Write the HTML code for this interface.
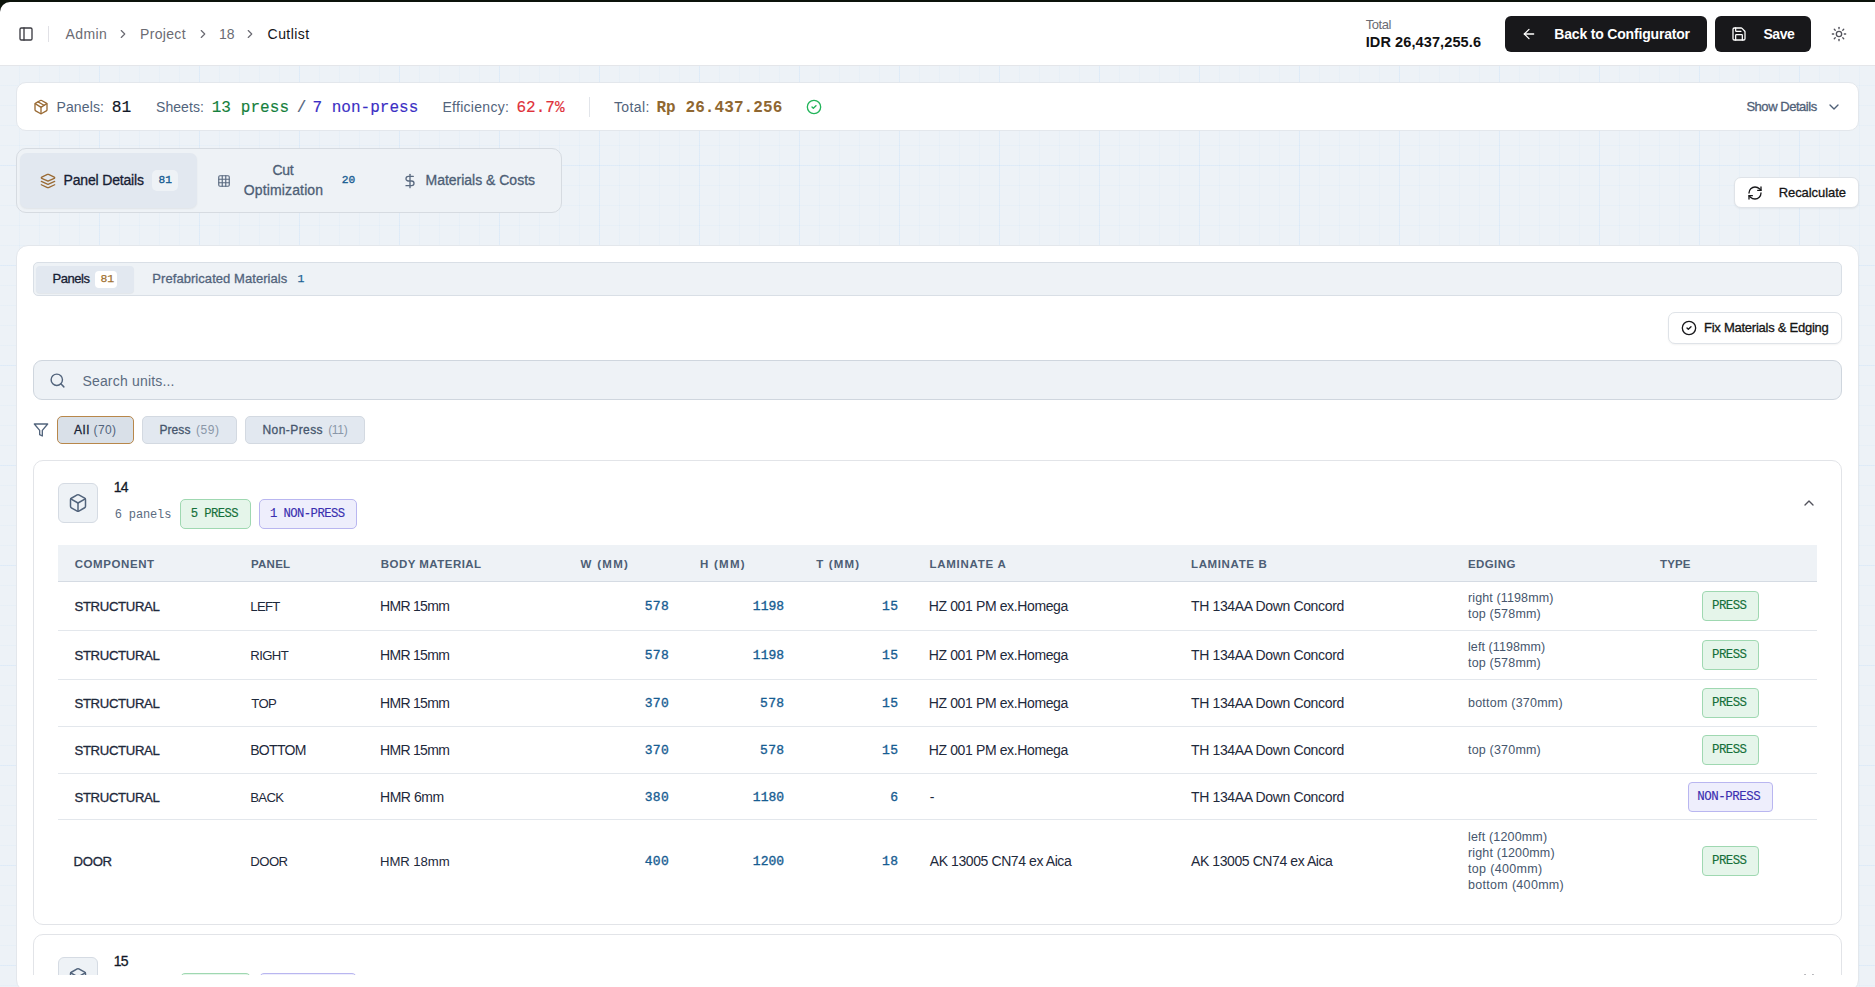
<!DOCTYPE html><html><head><meta charset="utf-8"><style>*{box-sizing:border-box;margin:0;padding:0}
html,body{width:1875px;height:987px;overflow:hidden}
body{font-family:"Liberation Sans",sans-serif;position:relative;background-color:#edf2f7;
background-image:linear-gradient(to right,rgba(147,197,253,.11) 1px,transparent 1px),linear-gradient(to bottom,rgba(147,197,253,.11) 1px,transparent 1px),linear-gradient(to right,rgba(147,197,253,.06) 1px,transparent 1px),linear-gradient(to bottom,rgba(147,197,253,.06) 1px,transparent 1px);
background-size:100px 100px,100px 100px,20px 20px,20px 20px;background-position:99px 65px,99px 65px,19px 5px,19px 5px}
.t{position:absolute;white-space:nowrap}
.r{position:absolute}
svg{position:absolute;overflow:visible}
#topbar{position:absolute;left:0;top:0;width:1875px;height:2px;background:#0c130b}
#corner{position:absolute;left:0;top:2px;width:10px;height:10px;background:#0c130b}
</style></head><body><div id="topbar"></div><div id="corner"></div>
<div class="r" style="left:0px;top:2px;width:1875px;height:64px;background:#fff;border-bottom:1px solid #e4e6ea;border-radius:10px 0 0 0"></div>
<svg style="left:17.95px;top:25.85px" width="16" height="16" viewBox="0 0 24 24" fill="none" stroke="#3b3b42" stroke-width="2" stroke-linecap="round" stroke-linejoin="round"><rect width="18" height="18" x="3" y="3" rx="2"/><path d="M9 3v18"/></svg>
<div class="r" style="left:48px;top:26px;width:1px;height:16px;background:#e1e1e6"></div>
<div class="t" id="t1" style="left:65.50px;top:24.00px;font-size:14px;line-height:20px;color:#6b6b73;font-weight:normal;font-family:'Liberation Sans',sans-serif;letter-spacing:0.401px;">Admin</div>
<svg style="left:115.70px;top:26.90px" width="14" height="14" viewBox="0 0 24 24" fill="none" stroke="#6b6b73" stroke-width="2" stroke-linecap="round" stroke-linejoin="round"><path d="m9 18 6-6-6-6"/></svg>
<div class="t" id="t2" style="left:140.00px;top:24.00px;font-size:14px;line-height:20px;color:#6b6b73;font-weight:normal;font-family:'Liberation Sans',sans-serif;letter-spacing:0.336px;">Project</div>
<svg style="left:196.05px;top:26.90px" width="14" height="14" viewBox="0 0 24 24" fill="none" stroke="#6b6b73" stroke-width="2" stroke-linecap="round" stroke-linejoin="round"><path d="m9 18 6-6-6-6"/></svg>
<div class="t" id="t3" style="left:219.00px;top:24.00px;font-size:14px;line-height:20px;color:#6b6b73;font-weight:normal;font-family:'Liberation Sans',sans-serif;letter-spacing:0.000px;">18</div>
<svg style="left:243.00px;top:26.90px" width="14" height="14" viewBox="0 0 24 24" fill="none" stroke="#6b6b73" stroke-width="2" stroke-linecap="round" stroke-linejoin="round"><path d="m9 18 6-6-6-6"/></svg>
<div class="t" id="t4" style="left:267.60px;top:24.00px;font-size:14px;line-height:20px;color:#141418;font-weight:normal;font-family:'Liberation Sans',sans-serif;letter-spacing:0.432px;">Cutlist</div>
<div class="t" id="t5" style="left:1365.70px;top:15.00px;font-size:13px;line-height:20px;color:#6b6b73;font-weight:normal;font-family:'Liberation Sans',sans-serif;letter-spacing:-0.468px;">Total</div>
<div class="t" id="t6" style="left:1365.70px;top:32.00px;font-size:14.5px;line-height:20px;color:#111;font-weight:bold;font-family:'Liberation Sans',sans-serif;letter-spacing:0.107px;">IDR 26,437,255.6</div>
<div class="r" style="left:1505px;top:16px;width:202px;height:36px;background:#18181b;border-radius:6px"></div>
<svg style="left:1520.90px;top:26.05px" width="16" height="16" viewBox="0 0 24 24" fill="none" stroke="#fff" stroke-width="1.9" stroke-linecap="round" stroke-linejoin="round"><path d="m12 19-7-7 7-7"/><path d="M19 12H5"/></svg>
<div class="t" id="t7" style="left:1554.30px;top:24.00px;font-size:14px;line-height:20px;color:#fff;font-weight:bold;font-family:'Liberation Sans',sans-serif;letter-spacing:-0.183px;">Back to Configurator</div>
<div class="r" style="left:1715px;top:16px;width:96px;height:36px;background:#18181b;border-radius:6px"></div>
<svg style="left:1731.15px;top:25.95px" width="16" height="16" viewBox="0 0 24 24" fill="none" stroke="#fff" stroke-width="1.9" stroke-linecap="round" stroke-linejoin="round"><path d="M15.2 3a2 2 0 0 1 1.4.6l3.8 3.8a2 2 0 0 1 .6 1.4V19a2 2 0 0 1-2 2H5a2 2 0 0 1-2-2V5a2 2 0 0 1 2-2z"/><path d="M17 21v-7a1 1 0 0 0-1-1H8a1 1 0 0 0-1 1v7"/><path d="M7 3v4a1 1 0 0 0 1 1h7"/></svg>
<div class="t" id="t8" style="left:1763.40px;top:24.00px;font-size:14px;line-height:20px;color:#fff;font-weight:bold;font-family:'Liberation Sans',sans-serif;letter-spacing:-0.403px;">Save</div>
<svg style="left:1831.00px;top:26.00px" width="16" height="16" viewBox="0 0 24 24" fill="none" stroke="#52525b" stroke-width="2" stroke-linecap="round" stroke-linejoin="round"><circle cx="12" cy="12" r="4"/><path d="M12 2v2"/><path d="M12 20v2"/><path d="m4.93 4.93 1.41 1.41"/><path d="m17.66 17.66 1.41 1.41"/><path d="M2 12h2"/><path d="M20 12h2"/><path d="m6.34 17.66-1.41 1.41"/><path d="m19.07 4.93-1.41 1.41"/></svg>
<div class="r" style="left:16px;top:82px;width:1843px;height:49px;background:#fff;border:1px solid #e3e7ec;border-radius:10px"></div>
<svg style="left:32.75px;top:99.00px" width="16" height="16" viewBox="0 0 24 24" fill="none" stroke="#9a6b35" stroke-width="2" stroke-linecap="round" stroke-linejoin="round"><path d="M11 21.73a2 2 0 0 0 2 0l7-4A2 2 0 0 0 21 16V8a2 2 0 0 0-1-1.73l-7-4a2 2 0 0 0-2 0l-7 4A2 2 0 0 0 3 8v8a2 2 0 0 0 1 1.73z"/><path d="M12 22V12"/><path d="m3.3 7 7.703 4.734a2 2 0 0 0 1.994 0L20.7 7"/><path d="m7.5 4.27 9 5.15"/></svg>
<div class="t" id="t9" style="left:56.50px;top:97.00px;font-size:14px;line-height:20px;color:#52647c;font-weight:normal;font-family:'Liberation Sans',sans-serif;letter-spacing:0.116px;">Panels:</div>
<div class="t" id="t10" style="left:111.64px;top:98.00px;font-size:16.29px;line-height:20px;color:#111827;font-weight:normal;font-family:'Liberation Mono',monospace;letter-spacing:0.000px;-webkit-text-stroke:0.15px #111827;">81</div>
<div class="t" id="t11" style="left:156.00px;top:97.00px;font-size:14px;line-height:20px;color:#52647c;font-weight:normal;font-family:'Liberation Sans',sans-serif;letter-spacing:0.069px;">Sheets:</div>
<div class="t" id="t12" style="left:211.70px;top:98.00px;font-size:16px;line-height:20px;color:#15803d;font-weight:normal;font-family:'Liberation Mono',monospace;letter-spacing:0.084px;-webkit-text-stroke:0.15px #15803d;">13 press</div>
<div class="t" id="t13" style="left:296.70px;top:98.00px;font-size:16px;line-height:20px;color:#52647c;font-weight:normal;font-family:'Liberation Mono',monospace;letter-spacing:0.000px;-webkit-text-stroke:0.15px #52647c;">/</div>
<div class="t" id="t14" style="left:312.50px;top:98.00px;font-size:16px;line-height:20px;color:#3b2fc4;font-weight:normal;font-family:'Liberation Mono',monospace;letter-spacing:0.018px;-webkit-text-stroke:0.15px #3b2fc4;">7 non-press</div>
<div class="t" id="t15" style="left:442.40px;top:97.00px;font-size:14px;line-height:20px;color:#52647c;font-weight:normal;font-family:'Liberation Sans',sans-serif;letter-spacing:0.294px;">Efficiency:</div>
<div class="t" id="t16" style="left:516.40px;top:98.00px;font-size:16px;line-height:20px;color:#e0313a;font-weight:normal;font-family:'Liberation Mono',monospace;letter-spacing:0.023px;-webkit-text-stroke:0.15px #e0313a;">62.7%</div>
<div class="r" style="left:589px;top:97px;width:1px;height:20px;background:#e2e5ea"></div>
<div class="t" id="t17" style="left:614.00px;top:97.00px;font-size:14px;line-height:20px;color:#52647c;font-weight:normal;font-family:'Liberation Sans',sans-serif;letter-spacing:0.366px;">Total:</div>
<div class="t" id="t18" style="left:656.40px;top:98.00px;font-size:16px;line-height:20px;color:#8f6731;font-weight:bold;font-family:'Liberation Mono',monospace;letter-spacing:0.090px;">Rp 26.437.256</div>
<svg style="left:805.65px;top:98.80px" width="16" height="16" viewBox="0 0 24 24" fill="none" stroke="#22b45a" stroke-width="2" stroke-linecap="round" stroke-linejoin="round"><circle cx="12" cy="12" r="10"/><path d="m9 12 2 2 4-4"/></svg>
<div class="t" id="t19" style="left:1746.40px;top:97.00px;font-size:13px;line-height:20px;color:#4f6077;font-weight:normal;font-family:'Liberation Sans',sans-serif;letter-spacing:-0.461px;-webkit-text-stroke:0.3px #4f6077;">Show Details</div>
<svg style="left:1826.00px;top:99.20px" width="16" height="16" viewBox="0 0 24 24" fill="none" stroke="#4f6077" stroke-width="2" stroke-linecap="round" stroke-linejoin="round"><path d="m6 9 6 6 6-6"/></svg>
<div class="r" style="left:16px;top:148px;width:546px;height:65px;background:#eef2f6;border:1px solid #d6dbe1;border-radius:10px"></div>
<div class="r" style="left:20px;top:153px;width:177px;height:55px;background:#e2e8f0;border-radius:7px;box-shadow:0 1px 2px rgba(0,0,0,.06)"></div>
<svg style="left:40.05px;top:173.05px" width="16" height="16" viewBox="0 0 24 24" fill="none" stroke="#9a6b35" stroke-width="2" stroke-linecap="round" stroke-linejoin="round"><path d="m12.83 2.18a2 2 0 0 0-1.66 0L2.6 6.08a1 1 0 0 0 0 1.83l8.58 3.91a2 2 0 0 0 1.66 0l8.58-3.9a1 1 0 0 0 0-1.83Z"/><path d="m22 17.65-9.17 4.16a2 2 0 0 1-1.66 0L2 17.65"/><path d="m22 12.65-9.17 4.16a2 2 0 0 1-1.66 0L2 12.65"/></svg>
<div class="t" id="t20" style="left:63.50px;top:170.00px;font-size:14px;line-height:20px;color:#172033;font-weight:normal;font-family:'Liberation Sans',sans-serif;letter-spacing:-0.166px;-webkit-text-stroke:0.3px #172033;">Panel Details</div>
<div class="r" style="left:152px;top:170px;width:26px;height:21px;background:#eef2f6;border-radius:5px"></div>
<div class="t" id="t21" style="left:158.60px;top:170.00px;font-size:11.2px;line-height:20px;color:#1b5f94;font-weight:normal;font-family:'Liberation Mono',monospace;letter-spacing:0.000px;-webkit-text-stroke:0.35px #1b5f94;">81</div>
<svg style="left:216.85px;top:174.20px" width="14" height="14" viewBox="0 0 24 24" fill="none" stroke="#5a6a80" stroke-width="2" stroke-linecap="round" stroke-linejoin="round"><rect width="18" height="18" x="3" y="3" rx="2"/><path d="M3 9h18"/><path d="M3 15h18"/><path d="M9 3v18"/><path d="M15 3v18"/></svg>
<div class="t" id="t22" style="left:272.60px;top:160.00px;font-size:14px;line-height:20px;color:#4d5e75;font-weight:normal;font-family:'Liberation Sans',sans-serif;letter-spacing:-0.398px;-webkit-text-stroke:0.3px #4d5e75;">Cut</div>
<div class="t" id="t23" style="left:243.80px;top:180.00px;font-size:14px;line-height:20px;color:#4d5e75;font-weight:normal;font-family:'Liberation Sans',sans-serif;letter-spacing:0.134px;-webkit-text-stroke:0.3px #4d5e75;">Optimization</div>
<div class="t" id="t24" style="left:341.70px;top:170.00px;font-size:11.2px;line-height:20px;color:#1b5f94;font-weight:normal;font-family:'Liberation Mono',monospace;letter-spacing:0.000px;-webkit-text-stroke:0.35px #1b5f94;">20</div>
<svg style="left:401.90px;top:173.00px" width="16" height="16" viewBox="0 0 24 24" fill="none" stroke="#5a6a80" stroke-width="2" stroke-linecap="round" stroke-linejoin="round"><path d="M12 2v20"/><path d="M17 5H9.5a3.5 3.5 0 0 0 0 7h5a3.5 3.5 0 0 1 0 7H6"/></svg>
<div class="t" id="t25" style="left:425.50px;top:170.00px;font-size:14px;line-height:20px;color:#4d5e75;font-weight:normal;font-family:'Liberation Sans',sans-serif;letter-spacing:-0.012px;-webkit-text-stroke:0.3px #4d5e75;">Materials &amp; Costs</div>
<div class="r" style="left:1734px;top:177px;width:125px;height:31px;background:#fff;border:1px solid #dfe3e8;border-radius:7px;box-shadow:0 1px 2px rgba(0,0,0,.05)"></div>
<svg style="left:1746.80px;top:184.90px" width="16" height="16" viewBox="0 0 24 24" fill="none" stroke="#18181b" stroke-width="2" stroke-linecap="round" stroke-linejoin="round"><path d="M3 12a9 9 0 0 1 9-9 9.75 9.75 0 0 1 6.74 2.74L21 8"/><path d="M21 3v5h-5"/><path d="M21 12a9 9 0 0 1-9 9 9.75 9.75 0 0 1-6.74-2.74L3 16"/><path d="M8 16H3v5"/></svg>
<div class="t" id="t26" style="left:1778.70px;top:183.00px;font-size:13px;line-height:20px;color:#151515;font-weight:normal;font-family:'Liberation Sans',sans-serif;letter-spacing:-0.070px;-webkit-text-stroke:0.3px #151515;">Recalculate</div>
<div class="r" style="left:16px;top:245px;width:1843px;height:747px;background:#fff;border:1px solid #e3e7ec;border-radius:12px"></div>
<div class="r" style="left:17px;top:246px;width:1840px;height:729px;overflow:hidden">
<div class="r" style="left:-17px;top:-246px;width:1875px;height:1300px">
<div class="r" style="left:33px;top:262px;width:1809px;height:34px;background:#eef2f6;border:1px solid #d9dfe6;border-radius:5px"></div>
<div class="r" style="left:36px;top:265.5px;width:97.5px;height:27.5px;background:#e2e8f0;border-radius:4px;box-shadow:0 1px 1px rgba(0,0,0,.05)"></div>
<div class="t" id="t27" style="left:52.50px;top:269.00px;font-size:13px;line-height:20px;color:#172033;font-weight:normal;font-family:'Liberation Sans',sans-serif;letter-spacing:-0.450px;-webkit-text-stroke:0.3px #172033;">Panels</div>
<div class="r" style="left:95px;top:271px;width:21.5px;height:17px;background:#fff;border-radius:4px"></div>
<div class="t" id="t28" style="left:100.40px;top:269.00px;font-size:11.5px;line-height:20px;color:#a0702f;font-weight:normal;font-family:'Liberation Mono',monospace;letter-spacing:0.000px;-webkit-text-stroke:0.25px #a0702f;">81</div>
<div class="t" id="t29" style="left:152.30px;top:269.00px;font-size:13px;line-height:20px;color:#52647c;font-weight:normal;font-family:'Liberation Sans',sans-serif;letter-spacing:0.061px;-webkit-text-stroke:0.3px #52647c;">Prefabricated Materials</div>
<div class="t" id="t30" style="left:297.50px;top:269.00px;font-size:11.5px;line-height:20px;color:#1b5f94;font-weight:normal;font-family:'Liberation Mono',monospace;letter-spacing:0.000px;-webkit-text-stroke:0.25px #1b5f94;">1</div>
<div class="r" style="left:1668px;top:312px;width:174px;height:32px;background:#fff;border:1px solid #dfe3e8;border-radius:7px;box-shadow:0 1px 2px rgba(0,0,0,.05)"></div>
<svg style="left:1681.05px;top:319.85px" width="16" height="16" viewBox="0 0 24 24" fill="none" stroke="#18181b" stroke-width="2" stroke-linecap="round" stroke-linejoin="round"><circle cx="12" cy="12" r="10"/><path d="m9 12 2 2 4-4"/></svg>
<div class="t" id="t31" style="left:1704.00px;top:318.00px;font-size:13px;line-height:20px;color:#151515;font-weight:normal;font-family:'Liberation Sans',sans-serif;letter-spacing:-0.249px;-webkit-text-stroke:0.3px #151515;">Fix Materials &amp; Edging</div>
<div class="r" style="left:33px;top:360px;width:1809px;height:40px;background:#eef2f6;border:1px solid #cfd6de;border-radius:9px"></div>
<svg style="left:48.50px;top:371.60px" width="17" height="17" viewBox="0 0 24 24" fill="none" stroke="#52647c" stroke-width="2" stroke-linecap="round" stroke-linejoin="round"><circle cx="11" cy="11" r="8"/><path d="m21 21-4.3-4.3"/></svg>
<div class="t" id="t32" style="left:82.40px;top:371.00px;font-size:14px;line-height:20px;color:#5b6b80;font-weight:normal;font-family:'Liberation Sans',sans-serif;letter-spacing:0.186px;">Search units...</div>
<svg style="left:32.65px;top:421.50px" width="16" height="16" viewBox="0 0 24 24" fill="none" stroke="#52647c" stroke-width="2" stroke-linecap="round" stroke-linejoin="round"><polygon points="22 3 2 3 10 12.46 10 19 14 21 14 12.46 22 3"/></svg>
<div class="r" style="left:57px;top:416px;width:77px;height:28px;background:#d9e0e8;border:1px solid #b8874a;border-radius:5px"></div>
<div class="t" id="t33" style="left:73.90px;top:420.00px;font-size:12px;line-height:20px;color:#172033;font-weight:normal;font-family:'Liberation Sans',sans-serif;letter-spacing:0.965px;-webkit-text-stroke:0.3px #172033;">All</div>
<div class="t" id="t34" style="left:93.60px;top:420.00px;font-size:12px;line-height:20px;color:#52647c;font-weight:normal;font-family:'Liberation Sans',sans-serif;letter-spacing:0.352px;">(70)</div>
<div class="r" style="left:142px;top:416px;width:95px;height:28px;background:#e2e8f0;border:1px solid #d3d9e1;border-radius:5px"></div>
<div class="t" id="t35" style="left:159.50px;top:420.00px;font-size:12px;line-height:20px;color:#46566d;font-weight:normal;font-family:'Liberation Sans',sans-serif;letter-spacing:0.057px;-webkit-text-stroke:0.3px #46566d;">Press</div>
<div class="t" id="t36" style="left:196.00px;top:420.00px;font-size:12px;line-height:20px;color:#8a97a8;font-weight:normal;font-family:'Liberation Sans',sans-serif;letter-spacing:0.552px;">(59)</div>
<div class="r" style="left:245px;top:416px;width:120px;height:28px;background:#e2e8f0;border:1px solid #d3d9e1;border-radius:5px"></div>
<div class="t" id="t37" style="left:262.50px;top:420.00px;font-size:12px;line-height:20px;color:#46566d;font-weight:normal;font-family:'Liberation Sans',sans-serif;letter-spacing:0.427px;-webkit-text-stroke:0.3px #46566d;">Non-Press</div>
<div class="t" id="t38" style="left:328.20px;top:420.00px;font-size:12px;line-height:20px;color:#8a97a8;font-weight:normal;font-family:'Liberation Sans',sans-serif;letter-spacing:-0.318px;">(11)</div>
<div class="r" style="left:33px;top:460px;width:1809px;height:465px;background:#fff;border:1px solid #e2e4e8;border-radius:10px"></div>
<div class="r" style="left:58px;top:483px;width:40px;height:40px;background:#eef2f6;border:1px solid #d5dbe3;border-radius:6px"></div>
<svg style="left:68.00px;top:493.00px" width="20" height="20" viewBox="0 0 24 24" fill="none" stroke="#52647c" stroke-width="1.8" stroke-linecap="round" stroke-linejoin="round"><path d="M21 8a2 2 0 0 0-1-1.73l-7-4a2 2 0 0 0-2 0l-7 4A2 2 0 0 0 3 8v8a2 2 0 0 0 1 1.73l7 4a2 2 0 0 0 2 0l7-4A2 2 0 0 0 21 16Z"/><path d="m3.3 7 8.7 5 8.7-5"/><path d="M12 22V12"/></svg>
<div class="t" id="t39" style="left:113.70px;top:477.00px;font-size:14px;line-height:20px;color:#111827;font-weight:normal;font-family:'Liberation Sans',sans-serif;letter-spacing:-0.686px;-webkit-text-stroke:0.3px #111827;">14</div>
<div class="t" id="t40" style="left:114.70px;top:505.00px;font-size:12px;line-height:20px;color:#5b6b80;font-weight:normal;font-family:'Liberation Mono',monospace;letter-spacing:-0.130px;">6 panels</div>
<div class="r" style="left:180px;top:499px;width:71px;height:30px;background:#e5f5ea;border:1px solid #9fd8b1;border-radius:5px"></div>
<div class="t" id="t41" style="left:190.70px;top:504.00px;font-size:12.22px;line-height:20px;color:#15703a;font-weight:normal;font-family:'Liberation Mono',monospace;letter-spacing:-0.587px;-webkit-text-stroke:0.15px #15703a;">5 PRESS</div>
<div class="r" style="left:259px;top:499px;width:98px;height:30px;background:#eeeefc;border:1px solid #b9b6f0;border-radius:5px"></div>
<div class="t" id="t42" style="left:269.90px;top:504.00px;font-size:12.22px;line-height:20px;color:#3a2fb0;font-weight:normal;font-family:'Liberation Mono',monospace;letter-spacing:-0.545px;-webkit-text-stroke:0.15px #3a2fb0;">1 NON-PRESS</div>
<svg style="left:1800.90px;top:495.00px" width="16" height="16" viewBox="0 0 24 24" fill="none" stroke="#52525b" stroke-width="2" stroke-linecap="round" stroke-linejoin="round"><path d="m18 15-6-6-6 6"/></svg>
<div class="r" style="left:58px;top:545px;width:1759px;height:37px;background:#eef2f6;border-bottom:1px solid #d5dbe3"></div>
<div class="t" id="t43" style="left:74.70px;top:554.00px;font-size:11.5px;line-height:20px;color:#4d5e75;font-weight:bold;font-family:'Liberation Sans',sans-serif;letter-spacing:0.584px;">COMPONENT</div>
<div class="t" id="t44" style="left:250.90px;top:554.00px;font-size:11.5px;line-height:20px;color:#4d5e75;font-weight:bold;font-family:'Liberation Sans',sans-serif;letter-spacing:0.276px;">PANEL</div>
<div class="t" id="t45" style="left:380.80px;top:554.00px;font-size:11.5px;line-height:20px;color:#4d5e75;font-weight:bold;font-family:'Liberation Sans',sans-serif;letter-spacing:0.462px;">BODY MATERIAL</div>
<div class="t" id="t46" style="left:580.50px;top:554.00px;font-size:11.5px;line-height:20px;color:#4d5e75;font-weight:bold;font-family:'Liberation Sans',sans-serif;letter-spacing:1.292px;">W (MM)</div>
<div class="t" id="t47" style="left:700.00px;top:554.00px;font-size:11.5px;line-height:20px;color:#4d5e75;font-weight:bold;font-family:'Liberation Sans',sans-serif;letter-spacing:1.262px;">H (MM)</div>
<div class="t" id="t48" style="left:816.20px;top:554.00px;font-size:11.5px;line-height:20px;color:#4d5e75;font-weight:bold;font-family:'Liberation Sans',sans-serif;letter-spacing:1.158px;">T (MM)</div>
<div class="t" id="t49" style="left:929.50px;top:554.00px;font-size:11.5px;line-height:20px;color:#4d5e75;font-weight:bold;font-family:'Liberation Sans',sans-serif;letter-spacing:0.728px;">LAMINATE A</div>
<div class="t" id="t50" style="left:1191.00px;top:554.00px;font-size:11.5px;line-height:20px;color:#4d5e75;font-weight:bold;font-family:'Liberation Sans',sans-serif;letter-spacing:0.628px;">LAMINATE B</div>
<div class="t" id="t51" style="left:1468.00px;top:554.00px;font-size:11.5px;line-height:20px;color:#4d5e75;font-weight:bold;font-family:'Liberation Sans',sans-serif;letter-spacing:0.396px;">EDGING</div>
<div class="t" id="t52" style="left:1660.00px;top:554.00px;font-size:11.5px;line-height:20px;color:#4d5e75;font-weight:bold;font-family:'Liberation Sans',sans-serif;letter-spacing:0.112px;">TYPE</div>
<div class="r" style="left:58px;top:630px;width:1759px;height:1px;background:#e3e7ec"></div>
<div class="t" id="t53" style="left:74.50px;top:597.00px;font-size:13.16px;line-height:20px;color:#1e293b;font-weight:normal;font-family:'Liberation Sans',sans-serif;letter-spacing:-0.352px;-webkit-text-stroke:0.3px #1e293b;">STRUCTURAL</div>
<div class="t" id="t54" style="left:250.26px;top:597.00px;font-size:13.16px;line-height:20px;color:#1e293b;font-weight:normal;font-family:'Liberation Sans',sans-serif;letter-spacing:-0.685px;">LEFT</div>
<div class="t" id="t55" style="left:380.00px;top:596.00px;font-size:14px;line-height:20px;color:#1e293b;font-weight:normal;font-family:'Liberation Sans',sans-serif;letter-spacing:-0.687px;">HMR 15mm</div>
<div class="t" id="t56" style="left:644.70px;top:597.00px;font-size:13px;line-height:20px;color:#175d92;font-weight:normal;font-family:'Liberation Mono',monospace;letter-spacing:0.349px;-webkit-text-stroke:0.35px #175d92;">578</div>
<div class="t" id="t57" style="left:752.80px;top:597.00px;font-size:13px;line-height:20px;color:#175d92;font-weight:normal;font-family:'Liberation Mono',monospace;letter-spacing:0.032px;-webkit-text-stroke:0.35px #175d92;">1198</div>
<div class="t" id="t58" style="left:882.00px;top:597.00px;font-size:13px;line-height:20px;color:#175d92;font-weight:normal;font-family:'Liberation Mono',monospace;letter-spacing:0.499px;-webkit-text-stroke:0.35px #175d92;">15</div>
<div class="t" id="t59" style="left:928.80px;top:596.00px;font-size:14px;line-height:20px;color:#1e293b;font-weight:normal;font-family:'Liberation Sans',sans-serif;letter-spacing:-0.378px;">HZ 001 PM ex.Homega</div>
<div class="t" id="t60" style="left:1191.00px;top:596.00px;font-size:14px;line-height:20px;color:#1e293b;font-weight:normal;font-family:'Liberation Sans',sans-serif;letter-spacing:-0.354px;">TH 134AA Down Concord</div>
<div class="t" id="t61" style="left:1468.00px;top:588.00px;font-size:12.5px;line-height:20px;color:#46566d;font-weight:normal;font-family:'Liberation Sans',sans-serif;letter-spacing:0.119px;">right (1198mm)</div>
<div class="t" id="t62" style="left:1468.00px;top:604.00px;font-size:12.5px;line-height:20px;color:#46566d;font-weight:normal;font-family:'Liberation Sans',sans-serif;letter-spacing:0.191px;">top (578mm)</div>
<div class="r" style="left:1702px;top:591px;width:57px;height:30px;background:#e5f5ea;border:1px solid #9fd8b1;border-radius:4px"></div>
<div class="t" id="t63" style="left:1712.06px;top:596.00px;font-size:12.41px;line-height:20px;color:#15703a;font-weight:normal;font-family:'Liberation Mono',monospace;letter-spacing:-0.584px;-webkit-text-stroke:0.15px #15703a;">PRESS</div>
<div class="r" style="left:58px;top:679px;width:1759px;height:1px;background:#e3e7ec"></div>
<div class="t" id="t64" style="left:74.50px;top:646.00px;font-size:13.16px;line-height:20px;color:#1e293b;font-weight:normal;font-family:'Liberation Sans',sans-serif;letter-spacing:-0.352px;-webkit-text-stroke:0.3px #1e293b;">STRUCTURAL</div>
<div class="t" id="t65" style="left:250.26px;top:646.00px;font-size:13.16px;line-height:20px;color:#1e293b;font-weight:normal;font-family:'Liberation Sans',sans-serif;letter-spacing:-0.605px;">RIGHT</div>
<div class="t" id="t66" style="left:380.00px;top:645.00px;font-size:14px;line-height:20px;color:#1e293b;font-weight:normal;font-family:'Liberation Sans',sans-serif;letter-spacing:-0.687px;">HMR 15mm</div>
<div class="t" id="t67" style="left:644.70px;top:646.00px;font-size:13px;line-height:20px;color:#175d92;font-weight:normal;font-family:'Liberation Mono',monospace;letter-spacing:0.349px;-webkit-text-stroke:0.35px #175d92;">578</div>
<div class="t" id="t68" style="left:752.80px;top:646.00px;font-size:13px;line-height:20px;color:#175d92;font-weight:normal;font-family:'Liberation Mono',monospace;letter-spacing:0.032px;-webkit-text-stroke:0.35px #175d92;">1198</div>
<div class="t" id="t69" style="left:882.00px;top:646.00px;font-size:13px;line-height:20px;color:#175d92;font-weight:normal;font-family:'Liberation Mono',monospace;letter-spacing:0.499px;-webkit-text-stroke:0.35px #175d92;">15</div>
<div class="t" id="t70" style="left:928.80px;top:645.00px;font-size:14px;line-height:20px;color:#1e293b;font-weight:normal;font-family:'Liberation Sans',sans-serif;letter-spacing:-0.378px;">HZ 001 PM ex.Homega</div>
<div class="t" id="t71" style="left:1191.00px;top:645.00px;font-size:14px;line-height:20px;color:#1e293b;font-weight:normal;font-family:'Liberation Sans',sans-serif;letter-spacing:-0.354px;">TH 134AA Down Concord</div>
<div class="t" id="t72" style="left:1468.00px;top:637.00px;font-size:12.5px;line-height:20px;color:#46566d;font-weight:normal;font-family:'Liberation Sans',sans-serif;letter-spacing:0.082px;">left (1198mm)</div>
<div class="t" id="t73" style="left:1468.00px;top:653.00px;font-size:12.5px;line-height:20px;color:#46566d;font-weight:normal;font-family:'Liberation Sans',sans-serif;letter-spacing:0.191px;">top (578mm)</div>
<div class="r" style="left:1702px;top:640px;width:57px;height:30px;background:#e5f5ea;border:1px solid #9fd8b1;border-radius:4px"></div>
<div class="t" id="t74" style="left:1712.06px;top:645.00px;font-size:12.41px;line-height:20px;color:#15703a;font-weight:normal;font-family:'Liberation Mono',monospace;letter-spacing:-0.584px;-webkit-text-stroke:0.15px #15703a;">PRESS</div>
<div class="r" style="left:58px;top:726px;width:1759px;height:1px;background:#e3e7ec"></div>
<div class="t" id="t75" style="left:74.50px;top:694.00px;font-size:13.16px;line-height:20px;color:#1e293b;font-weight:normal;font-family:'Liberation Sans',sans-serif;letter-spacing:-0.352px;-webkit-text-stroke:0.3px #1e293b;">STRUCTURAL</div>
<div class="t" id="t76" style="left:251.20px;top:694.00px;font-size:13.16px;line-height:20px;color:#1e293b;font-weight:normal;font-family:'Liberation Sans',sans-serif;letter-spacing:-0.549px;">TOP</div>
<div class="t" id="t77" style="left:380.00px;top:693.00px;font-size:14px;line-height:20px;color:#1e293b;font-weight:normal;font-family:'Liberation Sans',sans-serif;letter-spacing:-0.687px;">HMR 15mm</div>
<div class="t" id="t78" style="left:644.70px;top:694.00px;font-size:13px;line-height:20px;color:#175d92;font-weight:normal;font-family:'Liberation Mono',monospace;letter-spacing:0.349px;-webkit-text-stroke:0.35px #175d92;">370</div>
<div class="t" id="t79" style="left:760.00px;top:694.00px;font-size:13px;line-height:20px;color:#175d92;font-weight:normal;font-family:'Liberation Mono',monospace;letter-spacing:0.349px;-webkit-text-stroke:0.35px #175d92;">578</div>
<div class="t" id="t80" style="left:882.00px;top:694.00px;font-size:13px;line-height:20px;color:#175d92;font-weight:normal;font-family:'Liberation Mono',monospace;letter-spacing:0.499px;-webkit-text-stroke:0.35px #175d92;">15</div>
<div class="t" id="t81" style="left:928.80px;top:693.00px;font-size:14px;line-height:20px;color:#1e293b;font-weight:normal;font-family:'Liberation Sans',sans-serif;letter-spacing:-0.378px;">HZ 001 PM ex.Homega</div>
<div class="t" id="t82" style="left:1191.00px;top:693.00px;font-size:14px;line-height:20px;color:#1e293b;font-weight:normal;font-family:'Liberation Sans',sans-serif;letter-spacing:-0.354px;">TH 134AA Down Concord</div>
<div class="t" id="t83" style="left:1468.00px;top:693.00px;font-size:12.5px;line-height:20px;color:#46566d;font-weight:normal;font-family:'Liberation Sans',sans-serif;letter-spacing:0.228px;">bottom (370mm)</div>
<div class="r" style="left:1702px;top:688px;width:57px;height:30px;background:#e5f5ea;border:1px solid #9fd8b1;border-radius:4px"></div>
<div class="t" id="t84" style="left:1712.06px;top:693.00px;font-size:12.41px;line-height:20px;color:#15703a;font-weight:normal;font-family:'Liberation Mono',monospace;letter-spacing:-0.584px;-webkit-text-stroke:0.15px #15703a;">PRESS</div>
<div class="r" style="left:58px;top:773px;width:1759px;height:1px;background:#e3e7ec"></div>
<div class="t" id="t85" style="left:74.50px;top:741.00px;font-size:13.16px;line-height:20px;color:#1e293b;font-weight:normal;font-family:'Liberation Sans',sans-serif;letter-spacing:-0.352px;-webkit-text-stroke:0.3px #1e293b;">STRUCTURAL</div>
<div class="t" id="t86" style="left:250.20px;top:740.00px;font-size:14px;line-height:20px;color:#1e293b;font-weight:normal;font-family:'Liberation Sans',sans-serif;letter-spacing:-0.694px;">BOTTOM</div>
<div class="t" id="t87" style="left:380.00px;top:740.00px;font-size:14px;line-height:20px;color:#1e293b;font-weight:normal;font-family:'Liberation Sans',sans-serif;letter-spacing:-0.687px;">HMR 15mm</div>
<div class="t" id="t88" style="left:644.70px;top:741.00px;font-size:13px;line-height:20px;color:#175d92;font-weight:normal;font-family:'Liberation Mono',monospace;letter-spacing:0.349px;-webkit-text-stroke:0.35px #175d92;">370</div>
<div class="t" id="t89" style="left:760.00px;top:741.00px;font-size:13px;line-height:20px;color:#175d92;font-weight:normal;font-family:'Liberation Mono',monospace;letter-spacing:0.349px;-webkit-text-stroke:0.35px #175d92;">578</div>
<div class="t" id="t90" style="left:882.00px;top:741.00px;font-size:13px;line-height:20px;color:#175d92;font-weight:normal;font-family:'Liberation Mono',monospace;letter-spacing:0.499px;-webkit-text-stroke:0.35px #175d92;">15</div>
<div class="t" id="t91" style="left:928.80px;top:740.00px;font-size:14px;line-height:20px;color:#1e293b;font-weight:normal;font-family:'Liberation Sans',sans-serif;letter-spacing:-0.378px;">HZ 001 PM ex.Homega</div>
<div class="t" id="t92" style="left:1191.00px;top:740.00px;font-size:14px;line-height:20px;color:#1e293b;font-weight:normal;font-family:'Liberation Sans',sans-serif;letter-spacing:-0.354px;">TH 134AA Down Concord</div>
<div class="t" id="t93" style="left:1468.00px;top:740.00px;font-size:12.5px;line-height:20px;color:#46566d;font-weight:normal;font-family:'Liberation Sans',sans-serif;letter-spacing:0.191px;">top (370mm)</div>
<div class="r" style="left:1702px;top:735px;width:57px;height:30px;background:#e5f5ea;border:1px solid #9fd8b1;border-radius:4px"></div>
<div class="t" id="t94" style="left:1712.06px;top:740.00px;font-size:12.41px;line-height:20px;color:#15703a;font-weight:normal;font-family:'Liberation Mono',monospace;letter-spacing:-0.584px;-webkit-text-stroke:0.15px #15703a;">PRESS</div>
<div class="r" style="left:58px;top:819px;width:1759px;height:1px;background:#e3e7ec"></div>
<div class="t" id="t95" style="left:74.50px;top:788.00px;font-size:13.16px;line-height:20px;color:#1e293b;font-weight:normal;font-family:'Liberation Sans',sans-serif;letter-spacing:-0.352px;-webkit-text-stroke:0.3px #1e293b;">STRUCTURAL</div>
<div class="t" id="t96" style="left:250.26px;top:788.00px;font-size:13.16px;line-height:20px;color:#1e293b;font-weight:normal;font-family:'Liberation Sans',sans-serif;letter-spacing:-0.673px;">BACK</div>
<div class="t" id="t97" style="left:380.00px;top:787.00px;font-size:14px;line-height:20px;color:#1e293b;font-weight:normal;font-family:'Liberation Sans',sans-serif;letter-spacing:-0.453px;">HMR 6mm</div>
<div class="t" id="t98" style="left:644.70px;top:788.00px;font-size:13px;line-height:20px;color:#175d92;font-weight:normal;font-family:'Liberation Mono',monospace;letter-spacing:0.349px;-webkit-text-stroke:0.35px #175d92;">380</div>
<div class="t" id="t99" style="left:752.80px;top:788.00px;font-size:13px;line-height:20px;color:#175d92;font-weight:normal;font-family:'Liberation Mono',monospace;letter-spacing:0.032px;-webkit-text-stroke:0.35px #175d92;">1180</div>
<div class="t" id="t100" style="left:890.30px;top:788.00px;font-size:13px;line-height:20px;color:#175d92;font-weight:normal;font-family:'Liberation Mono',monospace;letter-spacing:0.000px;-webkit-text-stroke:0.35px #175d92;">6</div>
<div class="t" id="t101" style="left:929.80px;top:787.00px;font-size:14px;line-height:20px;color:#1e293b;font-weight:normal;font-family:'Liberation Sans',sans-serif;letter-spacing:0.000px;">-</div>
<div class="t" id="t102" style="left:1191.00px;top:787.00px;font-size:14px;line-height:20px;color:#1e293b;font-weight:normal;font-family:'Liberation Sans',sans-serif;letter-spacing:-0.354px;">TH 134AA Down Concord</div>
<div class="r" style="left:1688px;top:782px;width:85px;height:30px;background:#eeeefc;border:1px solid #b9b6f0;border-radius:4px"></div>
<div class="t" id="t103" style="left:1697.26px;top:787.00px;font-size:12.41px;line-height:20px;color:#3a2fb0;font-weight:normal;font-family:'Liberation Mono',monospace;letter-spacing:-0.436px;-webkit-text-stroke:0.15px #3a2fb0;">NON-PRESS</div>
<div class="t" id="t104" style="left:73.56px;top:852.00px;font-size:13.16px;line-height:20px;color:#1e293b;font-weight:normal;font-family:'Liberation Sans',sans-serif;letter-spacing:-0.312px;-webkit-text-stroke:0.3px #1e293b;">DOOR</div>
<div class="t" id="t105" style="left:250.26px;top:852.00px;font-size:13.16px;line-height:20px;color:#1e293b;font-weight:normal;font-family:'Liberation Sans',sans-serif;letter-spacing:-0.545px;">DOOR</div>
<div class="t" id="t106" style="left:380.06px;top:852.00px;font-size:13.16px;line-height:20px;color:#1e293b;font-weight:normal;font-family:'Liberation Sans',sans-serif;letter-spacing:-0.075px;">HMR 18mm</div>
<div class="t" id="t107" style="left:644.70px;top:852.00px;font-size:13px;line-height:20px;color:#175d92;font-weight:normal;font-family:'Liberation Mono',monospace;letter-spacing:0.349px;-webkit-text-stroke:0.35px #175d92;">400</div>
<div class="t" id="t108" style="left:752.80px;top:852.00px;font-size:13px;line-height:20px;color:#175d92;font-weight:normal;font-family:'Liberation Mono',monospace;letter-spacing:0.032px;-webkit-text-stroke:0.35px #175d92;">1200</div>
<div class="t" id="t109" style="left:882.00px;top:852.00px;font-size:13px;line-height:20px;color:#175d92;font-weight:normal;font-family:'Liberation Mono',monospace;letter-spacing:0.499px;-webkit-text-stroke:0.35px #175d92;">18</div>
<div class="t" id="t110" style="left:929.80px;top:851.00px;font-size:14px;line-height:20px;color:#1e293b;font-weight:normal;font-family:'Liberation Sans',sans-serif;letter-spacing:-0.415px;">AK 13005 CN74 ex Aica</div>
<div class="t" id="t111" style="left:1191.00px;top:851.00px;font-size:14px;line-height:20px;color:#1e293b;font-weight:normal;font-family:'Liberation Sans',sans-serif;letter-spacing:-0.415px;">AK 13005 CN74 ex Aica</div>
<div class="t" id="t112" style="left:1468.00px;top:827.00px;font-size:12.5px;line-height:20px;color:#46566d;font-weight:normal;font-family:'Liberation Sans',sans-serif;letter-spacing:0.163px;">left (1200mm)</div>
<div class="t" id="t113" style="left:1468.00px;top:843.00px;font-size:12.5px;line-height:20px;color:#46566d;font-weight:normal;font-family:'Liberation Sans',sans-serif;letter-spacing:0.140px;">right (1200mm)</div>
<div class="t" id="t114" style="left:1468.00px;top:859.00px;font-size:12.5px;line-height:20px;color:#46566d;font-weight:normal;font-family:'Liberation Sans',sans-serif;letter-spacing:0.341px;">top (400mm)</div>
<div class="t" id="t115" style="left:1468.00px;top:875.00px;font-size:12.5px;line-height:20px;color:#46566d;font-weight:normal;font-family:'Liberation Sans',sans-serif;letter-spacing:0.313px;">bottom (400mm)</div>
<div class="r" style="left:1702px;top:846px;width:57px;height:30px;background:#e5f5ea;border:1px solid #9fd8b1;border-radius:4px"></div>
<div class="t" id="t116" style="left:1712.06px;top:851.00px;font-size:12.41px;line-height:20px;color:#15703a;font-weight:normal;font-family:'Liberation Mono',monospace;letter-spacing:-0.584px;-webkit-text-stroke:0.15px #15703a;">PRESS</div>
<div class="r" style="left:33px;top:934px;width:1809px;height:465px;background:#fff;border:1px solid #e2e4e8;border-radius:10px"></div>
<div class="r" style="left:58px;top:957px;width:40px;height:40px;background:#eef2f6;border:1px solid #d5dbe3;border-radius:6px"></div>
<svg style="left:68.00px;top:967.00px" width="20" height="20" viewBox="0 0 24 24" fill="none" stroke="#52647c" stroke-width="1.8" stroke-linecap="round" stroke-linejoin="round"><path d="M21 8a2 2 0 0 0-1-1.73l-7-4a2 2 0 0 0-2 0l-7 4A2 2 0 0 0 3 8v8a2 2 0 0 0 1 1.73l7 4a2 2 0 0 0 2 0l7-4A2 2 0 0 0 21 16Z"/><path d="m3.3 7 8.7 5 8.7-5"/><path d="M12 22V12"/></svg>
<div class="t" id="t117" style="left:113.70px;top:951.00px;font-size:14px;line-height:20px;color:#111827;font-weight:normal;font-family:'Liberation Sans',sans-serif;letter-spacing:-0.686px;-webkit-text-stroke:0.3px #111827;">15</div>
<div class="t" id="t118" style="left:114.70px;top:979.00px;font-size:12px;line-height:20px;color:#5b6b80;font-weight:normal;font-family:'Liberation Mono',monospace;letter-spacing:-0.130px;">6 panels</div>
<div class="r" style="left:180px;top:973px;width:71px;height:30px;background:#e5f5ea;border:1px solid #9fd8b1;border-radius:5px"></div>
<div class="t" id="t119" style="left:190.70px;top:978.00px;font-size:12.22px;line-height:20px;color:#15703a;font-weight:normal;font-family:'Liberation Mono',monospace;letter-spacing:-0.587px;-webkit-text-stroke:0.15px #15703a;">5 PRESS</div>
<div class="r" style="left:259px;top:973px;width:98px;height:30px;background:#eeeefc;border:1px solid #b9b6f0;border-radius:5px"></div>
<div class="t" id="t120" style="left:269.90px;top:978.00px;font-size:12.22px;line-height:20px;color:#3a2fb0;font-weight:normal;font-family:'Liberation Mono',monospace;letter-spacing:-0.545px;-webkit-text-stroke:0.15px #3a2fb0;">1 NON-PRESS</div>
<svg style="left:1800.90px;top:968.60px" width="16" height="16" viewBox="0 0 24 24" fill="none" stroke="#52525b" stroke-width="2" stroke-linecap="round" stroke-linejoin="round"><path d="m6 9 6 6 6-6"/></svg>
<div class="r" style="left:58px;top:1019px;width:1759px;height:37px;background:#eef2f6;border-bottom:1px solid #d5dbe3"></div>
<div class="t" id="t121" style="left:74.70px;top:1028.00px;font-size:11.5px;line-height:20px;color:#4d5e75;font-weight:bold;font-family:'Liberation Sans',sans-serif;letter-spacing:0.584px;">COMPONENT</div>
<div class="t" id="t122" style="left:250.90px;top:1028.00px;font-size:11.5px;line-height:20px;color:#4d5e75;font-weight:bold;font-family:'Liberation Sans',sans-serif;letter-spacing:0.276px;">PANEL</div>
<div class="t" id="t123" style="left:380.80px;top:1028.00px;font-size:11.5px;line-height:20px;color:#4d5e75;font-weight:bold;font-family:'Liberation Sans',sans-serif;letter-spacing:0.462px;">BODY MATERIAL</div>
<div class="t" id="t124" style="left:580.50px;top:1028.00px;font-size:11.5px;line-height:20px;color:#4d5e75;font-weight:bold;font-family:'Liberation Sans',sans-serif;letter-spacing:1.292px;">W (MM)</div>
<div class="t" id="t125" style="left:700.00px;top:1028.00px;font-size:11.5px;line-height:20px;color:#4d5e75;font-weight:bold;font-family:'Liberation Sans',sans-serif;letter-spacing:1.262px;">H (MM)</div>
<div class="t" id="t126" style="left:816.20px;top:1028.00px;font-size:11.5px;line-height:20px;color:#4d5e75;font-weight:bold;font-family:'Liberation Sans',sans-serif;letter-spacing:1.158px;">T (MM)</div>
<div class="t" id="t127" style="left:929.50px;top:1028.00px;font-size:11.5px;line-height:20px;color:#4d5e75;font-weight:bold;font-family:'Liberation Sans',sans-serif;letter-spacing:0.728px;">LAMINATE A</div>
<div class="t" id="t128" style="left:1191.00px;top:1028.00px;font-size:11.5px;line-height:20px;color:#4d5e75;font-weight:bold;font-family:'Liberation Sans',sans-serif;letter-spacing:0.628px;">LAMINATE B</div>
<div class="t" id="t129" style="left:1468.00px;top:1028.00px;font-size:11.5px;line-height:20px;color:#4d5e75;font-weight:bold;font-family:'Liberation Sans',sans-serif;letter-spacing:0.396px;">EDGING</div>
<div class="t" id="t130" style="left:1660.00px;top:1028.00px;font-size:11.5px;line-height:20px;color:#4d5e75;font-weight:bold;font-family:'Liberation Sans',sans-serif;letter-spacing:0.112px;">TYPE</div>
<div class="r" style="left:58px;top:1104px;width:1759px;height:1px;background:#e3e7ec"></div>
<div class="t" id="t131" style="left:74.50px;top:1071.00px;font-size:13.16px;line-height:20px;color:#1e293b;font-weight:normal;font-family:'Liberation Sans',sans-serif;letter-spacing:-0.352px;-webkit-text-stroke:0.3px #1e293b;">STRUCTURAL</div>
<div class="t" id="t132" style="left:250.26px;top:1071.00px;font-size:13.16px;line-height:20px;color:#1e293b;font-weight:normal;font-family:'Liberation Sans',sans-serif;letter-spacing:-0.685px;">LEFT</div>
<div class="t" id="t133" style="left:380.00px;top:1070.00px;font-size:14px;line-height:20px;color:#1e293b;font-weight:normal;font-family:'Liberation Sans',sans-serif;letter-spacing:-0.687px;">HMR 15mm</div>
<div class="t" id="t134" style="left:644.70px;top:1071.00px;font-size:13px;line-height:20px;color:#175d92;font-weight:normal;font-family:'Liberation Mono',monospace;letter-spacing:0.349px;-webkit-text-stroke:0.35px #175d92;">578</div>
<div class="t" id="t135" style="left:752.80px;top:1071.00px;font-size:13px;line-height:20px;color:#175d92;font-weight:normal;font-family:'Liberation Mono',monospace;letter-spacing:0.032px;-webkit-text-stroke:0.35px #175d92;">1198</div>
<div class="t" id="t136" style="left:882.00px;top:1071.00px;font-size:13px;line-height:20px;color:#175d92;font-weight:normal;font-family:'Liberation Mono',monospace;letter-spacing:0.499px;-webkit-text-stroke:0.35px #175d92;">15</div>
<div class="t" id="t137" style="left:928.80px;top:1070.00px;font-size:14px;line-height:20px;color:#1e293b;font-weight:normal;font-family:'Liberation Sans',sans-serif;letter-spacing:-0.378px;">HZ 001 PM ex.Homega</div>
<div class="t" id="t138" style="left:1191.00px;top:1070.00px;font-size:14px;line-height:20px;color:#1e293b;font-weight:normal;font-family:'Liberation Sans',sans-serif;letter-spacing:-0.354px;">TH 134AA Down Concord</div>
<div class="t" id="t139" style="left:1468.00px;top:1062.00px;font-size:12.5px;line-height:20px;color:#46566d;font-weight:normal;font-family:'Liberation Sans',sans-serif;letter-spacing:0.119px;">right (1198mm)</div>
<div class="t" id="t140" style="left:1468.00px;top:1078.00px;font-size:12.5px;line-height:20px;color:#46566d;font-weight:normal;font-family:'Liberation Sans',sans-serif;letter-spacing:0.191px;">top (578mm)</div>
<div class="r" style="left:1702px;top:1065px;width:57px;height:30px;background:#e5f5ea;border:1px solid #9fd8b1;border-radius:4px"></div>
<div class="t" id="t141" style="left:1712.06px;top:1070.00px;font-size:12.41px;line-height:20px;color:#15703a;font-weight:normal;font-family:'Liberation Mono',monospace;letter-spacing:-0.584px;-webkit-text-stroke:0.15px #15703a;">PRESS</div>
<div class="r" style="left:58px;top:1153px;width:1759px;height:1px;background:#e3e7ec"></div>
<div class="t" id="t142" style="left:74.50px;top:1120.00px;font-size:13.16px;line-height:20px;color:#1e293b;font-weight:normal;font-family:'Liberation Sans',sans-serif;letter-spacing:-0.352px;-webkit-text-stroke:0.3px #1e293b;">STRUCTURAL</div>
<div class="t" id="t143" style="left:250.26px;top:1120.00px;font-size:13.16px;line-height:20px;color:#1e293b;font-weight:normal;font-family:'Liberation Sans',sans-serif;letter-spacing:-0.605px;">RIGHT</div>
<div class="t" id="t144" style="left:380.00px;top:1119.00px;font-size:14px;line-height:20px;color:#1e293b;font-weight:normal;font-family:'Liberation Sans',sans-serif;letter-spacing:-0.687px;">HMR 15mm</div>
<div class="t" id="t145" style="left:644.70px;top:1120.00px;font-size:13px;line-height:20px;color:#175d92;font-weight:normal;font-family:'Liberation Mono',monospace;letter-spacing:0.349px;-webkit-text-stroke:0.35px #175d92;">578</div>
<div class="t" id="t146" style="left:752.80px;top:1120.00px;font-size:13px;line-height:20px;color:#175d92;font-weight:normal;font-family:'Liberation Mono',monospace;letter-spacing:0.032px;-webkit-text-stroke:0.35px #175d92;">1198</div>
<div class="t" id="t147" style="left:882.00px;top:1120.00px;font-size:13px;line-height:20px;color:#175d92;font-weight:normal;font-family:'Liberation Mono',monospace;letter-spacing:0.499px;-webkit-text-stroke:0.35px #175d92;">15</div>
<div class="t" id="t148" style="left:928.80px;top:1119.00px;font-size:14px;line-height:20px;color:#1e293b;font-weight:normal;font-family:'Liberation Sans',sans-serif;letter-spacing:-0.378px;">HZ 001 PM ex.Homega</div>
<div class="t" id="t149" style="left:1191.00px;top:1119.00px;font-size:14px;line-height:20px;color:#1e293b;font-weight:normal;font-family:'Liberation Sans',sans-serif;letter-spacing:-0.354px;">TH 134AA Down Concord</div>
<div class="t" id="t150" style="left:1468.00px;top:1111.00px;font-size:12.5px;line-height:20px;color:#46566d;font-weight:normal;font-family:'Liberation Sans',sans-serif;letter-spacing:0.082px;">left (1198mm)</div>
<div class="t" id="t151" style="left:1468.00px;top:1127.00px;font-size:12.5px;line-height:20px;color:#46566d;font-weight:normal;font-family:'Liberation Sans',sans-serif;letter-spacing:0.191px;">top (578mm)</div>
<div class="r" style="left:1702px;top:1114px;width:57px;height:30px;background:#e5f5ea;border:1px solid #9fd8b1;border-radius:4px"></div>
<div class="t" id="t152" style="left:1712.06px;top:1119.00px;font-size:12.41px;line-height:20px;color:#15703a;font-weight:normal;font-family:'Liberation Mono',monospace;letter-spacing:-0.584px;-webkit-text-stroke:0.15px #15703a;">PRESS</div>
<div class="r" style="left:58px;top:1200px;width:1759px;height:1px;background:#e3e7ec"></div>
<div class="t" id="t153" style="left:74.50px;top:1168.00px;font-size:13.16px;line-height:20px;color:#1e293b;font-weight:normal;font-family:'Liberation Sans',sans-serif;letter-spacing:-0.352px;-webkit-text-stroke:0.3px #1e293b;">STRUCTURAL</div>
<div class="t" id="t154" style="left:251.20px;top:1168.00px;font-size:13.16px;line-height:20px;color:#1e293b;font-weight:normal;font-family:'Liberation Sans',sans-serif;letter-spacing:-0.549px;">TOP</div>
<div class="t" id="t155" style="left:380.00px;top:1167.00px;font-size:14px;line-height:20px;color:#1e293b;font-weight:normal;font-family:'Liberation Sans',sans-serif;letter-spacing:-0.687px;">HMR 15mm</div>
<div class="t" id="t156" style="left:644.70px;top:1168.00px;font-size:13px;line-height:20px;color:#175d92;font-weight:normal;font-family:'Liberation Mono',monospace;letter-spacing:0.349px;-webkit-text-stroke:0.35px #175d92;">370</div>
<div class="t" id="t157" style="left:760.00px;top:1168.00px;font-size:13px;line-height:20px;color:#175d92;font-weight:normal;font-family:'Liberation Mono',monospace;letter-spacing:0.349px;-webkit-text-stroke:0.35px #175d92;">578</div>
<div class="t" id="t158" style="left:882.00px;top:1168.00px;font-size:13px;line-height:20px;color:#175d92;font-weight:normal;font-family:'Liberation Mono',monospace;letter-spacing:0.499px;-webkit-text-stroke:0.35px #175d92;">15</div>
<div class="t" id="t159" style="left:928.80px;top:1167.00px;font-size:14px;line-height:20px;color:#1e293b;font-weight:normal;font-family:'Liberation Sans',sans-serif;letter-spacing:-0.378px;">HZ 001 PM ex.Homega</div>
<div class="t" id="t160" style="left:1191.00px;top:1167.00px;font-size:14px;line-height:20px;color:#1e293b;font-weight:normal;font-family:'Liberation Sans',sans-serif;letter-spacing:-0.354px;">TH 134AA Down Concord</div>
<div class="t" id="t161" style="left:1468.00px;top:1167.00px;font-size:12.5px;line-height:20px;color:#46566d;font-weight:normal;font-family:'Liberation Sans',sans-serif;letter-spacing:0.228px;">bottom (370mm)</div>
<div class="r" style="left:1702px;top:1162px;width:57px;height:30px;background:#e5f5ea;border:1px solid #9fd8b1;border-radius:4px"></div>
<div class="t" id="t162" style="left:1712.06px;top:1167.00px;font-size:12.41px;line-height:20px;color:#15703a;font-weight:normal;font-family:'Liberation Mono',monospace;letter-spacing:-0.584px;-webkit-text-stroke:0.15px #15703a;">PRESS</div>
<div class="r" style="left:58px;top:1247px;width:1759px;height:1px;background:#e3e7ec"></div>
<div class="t" id="t163" style="left:74.50px;top:1215.00px;font-size:13.16px;line-height:20px;color:#1e293b;font-weight:normal;font-family:'Liberation Sans',sans-serif;letter-spacing:-0.352px;-webkit-text-stroke:0.3px #1e293b;">STRUCTURAL</div>
<div class="t" id="t164" style="left:250.20px;top:1214.00px;font-size:14px;line-height:20px;color:#1e293b;font-weight:normal;font-family:'Liberation Sans',sans-serif;letter-spacing:-0.694px;">BOTTOM</div>
<div class="t" id="t165" style="left:380.00px;top:1214.00px;font-size:14px;line-height:20px;color:#1e293b;font-weight:normal;font-family:'Liberation Sans',sans-serif;letter-spacing:-0.687px;">HMR 15mm</div>
<div class="t" id="t166" style="left:644.70px;top:1215.00px;font-size:13px;line-height:20px;color:#175d92;font-weight:normal;font-family:'Liberation Mono',monospace;letter-spacing:0.349px;-webkit-text-stroke:0.35px #175d92;">370</div>
<div class="t" id="t167" style="left:760.00px;top:1215.00px;font-size:13px;line-height:20px;color:#175d92;font-weight:normal;font-family:'Liberation Mono',monospace;letter-spacing:0.349px;-webkit-text-stroke:0.35px #175d92;">578</div>
<div class="t" id="t168" style="left:882.00px;top:1215.00px;font-size:13px;line-height:20px;color:#175d92;font-weight:normal;font-family:'Liberation Mono',monospace;letter-spacing:0.499px;-webkit-text-stroke:0.35px #175d92;">15</div>
<div class="t" id="t169" style="left:928.80px;top:1214.00px;font-size:14px;line-height:20px;color:#1e293b;font-weight:normal;font-family:'Liberation Sans',sans-serif;letter-spacing:-0.378px;">HZ 001 PM ex.Homega</div>
<div class="t" id="t170" style="left:1191.00px;top:1214.00px;font-size:14px;line-height:20px;color:#1e293b;font-weight:normal;font-family:'Liberation Sans',sans-serif;letter-spacing:-0.354px;">TH 134AA Down Concord</div>
<div class="t" id="t171" style="left:1468.00px;top:1214.00px;font-size:12.5px;line-height:20px;color:#46566d;font-weight:normal;font-family:'Liberation Sans',sans-serif;letter-spacing:0.191px;">top (370mm)</div>
<div class="r" style="left:1702px;top:1209px;width:57px;height:30px;background:#e5f5ea;border:1px solid #9fd8b1;border-radius:4px"></div>
<div class="t" id="t172" style="left:1712.06px;top:1214.00px;font-size:12.41px;line-height:20px;color:#15703a;font-weight:normal;font-family:'Liberation Mono',monospace;letter-spacing:-0.584px;-webkit-text-stroke:0.15px #15703a;">PRESS</div>
<div class="r" style="left:58px;top:1293px;width:1759px;height:1px;background:#e3e7ec"></div>
<div class="t" id="t173" style="left:74.50px;top:1262.00px;font-size:13.16px;line-height:20px;color:#1e293b;font-weight:normal;font-family:'Liberation Sans',sans-serif;letter-spacing:-0.352px;-webkit-text-stroke:0.3px #1e293b;">STRUCTURAL</div>
<div class="t" id="t174" style="left:250.26px;top:1262.00px;font-size:13.16px;line-height:20px;color:#1e293b;font-weight:normal;font-family:'Liberation Sans',sans-serif;letter-spacing:-0.673px;">BACK</div>
<div class="t" id="t175" style="left:380.00px;top:1261.00px;font-size:14px;line-height:20px;color:#1e293b;font-weight:normal;font-family:'Liberation Sans',sans-serif;letter-spacing:-0.453px;">HMR 6mm</div>
<div class="t" id="t176" style="left:644.70px;top:1262.00px;font-size:13px;line-height:20px;color:#175d92;font-weight:normal;font-family:'Liberation Mono',monospace;letter-spacing:0.349px;-webkit-text-stroke:0.35px #175d92;">380</div>
<div class="t" id="t177" style="left:752.80px;top:1262.00px;font-size:13px;line-height:20px;color:#175d92;font-weight:normal;font-family:'Liberation Mono',monospace;letter-spacing:0.032px;-webkit-text-stroke:0.35px #175d92;">1180</div>
<div class="t" id="t178" style="left:890.30px;top:1262.00px;font-size:13px;line-height:20px;color:#175d92;font-weight:normal;font-family:'Liberation Mono',monospace;letter-spacing:0.000px;-webkit-text-stroke:0.35px #175d92;">6</div>
<div class="t" id="t179" style="left:929.80px;top:1261.00px;font-size:14px;line-height:20px;color:#1e293b;font-weight:normal;font-family:'Liberation Sans',sans-serif;letter-spacing:0.000px;">-</div>
<div class="t" id="t180" style="left:1191.00px;top:1261.00px;font-size:14px;line-height:20px;color:#1e293b;font-weight:normal;font-family:'Liberation Sans',sans-serif;letter-spacing:-0.354px;">TH 134AA Down Concord</div>
<div class="r" style="left:1688px;top:1256px;width:85px;height:30px;background:#eeeefc;border:1px solid #b9b6f0;border-radius:4px"></div>
<div class="t" id="t181" style="left:1697.26px;top:1261.00px;font-size:12.41px;line-height:20px;color:#3a2fb0;font-weight:normal;font-family:'Liberation Mono',monospace;letter-spacing:-0.436px;-webkit-text-stroke:0.15px #3a2fb0;">NON-PRESS</div>
<div class="t" id="t182" style="left:73.56px;top:1326.00px;font-size:13.16px;line-height:20px;color:#1e293b;font-weight:normal;font-family:'Liberation Sans',sans-serif;letter-spacing:-0.312px;-webkit-text-stroke:0.3px #1e293b;">DOOR</div>
<div class="t" id="t183" style="left:250.26px;top:1326.00px;font-size:13.16px;line-height:20px;color:#1e293b;font-weight:normal;font-family:'Liberation Sans',sans-serif;letter-spacing:-0.545px;">DOOR</div>
<div class="t" id="t184" style="left:380.06px;top:1326.00px;font-size:13.16px;line-height:20px;color:#1e293b;font-weight:normal;font-family:'Liberation Sans',sans-serif;letter-spacing:-0.075px;">HMR 18mm</div>
<div class="t" id="t185" style="left:644.70px;top:1326.00px;font-size:13px;line-height:20px;color:#175d92;font-weight:normal;font-family:'Liberation Mono',monospace;letter-spacing:0.349px;-webkit-text-stroke:0.35px #175d92;">400</div>
<div class="t" id="t186" style="left:752.80px;top:1326.00px;font-size:13px;line-height:20px;color:#175d92;font-weight:normal;font-family:'Liberation Mono',monospace;letter-spacing:0.032px;-webkit-text-stroke:0.35px #175d92;">1200</div>
<div class="t" id="t187" style="left:882.00px;top:1326.00px;font-size:13px;line-height:20px;color:#175d92;font-weight:normal;font-family:'Liberation Mono',monospace;letter-spacing:0.499px;-webkit-text-stroke:0.35px #175d92;">18</div>
<div class="t" id="t188" style="left:929.80px;top:1325.00px;font-size:14px;line-height:20px;color:#1e293b;font-weight:normal;font-family:'Liberation Sans',sans-serif;letter-spacing:-0.415px;">AK 13005 CN74 ex Aica</div>
<div class="t" id="t189" style="left:1191.00px;top:1325.00px;font-size:14px;line-height:20px;color:#1e293b;font-weight:normal;font-family:'Liberation Sans',sans-serif;letter-spacing:-0.415px;">AK 13005 CN74 ex Aica</div>
<div class="t" id="t190" style="left:1468.00px;top:1301.00px;font-size:12.5px;line-height:20px;color:#46566d;font-weight:normal;font-family:'Liberation Sans',sans-serif;letter-spacing:0.163px;">left (1200mm)</div>
<div class="t" id="t191" style="left:1468.00px;top:1317.00px;font-size:12.5px;line-height:20px;color:#46566d;font-weight:normal;font-family:'Liberation Sans',sans-serif;letter-spacing:0.140px;">right (1200mm)</div>
<div class="t" id="t192" style="left:1468.00px;top:1333.00px;font-size:12.5px;line-height:20px;color:#46566d;font-weight:normal;font-family:'Liberation Sans',sans-serif;letter-spacing:0.341px;">top (400mm)</div>
<div class="t" id="t193" style="left:1468.00px;top:1349.00px;font-size:12.5px;line-height:20px;color:#46566d;font-weight:normal;font-family:'Liberation Sans',sans-serif;letter-spacing:0.313px;">bottom (400mm)</div>
<div class="r" style="left:1702px;top:1320px;width:57px;height:30px;background:#e5f5ea;border:1px solid #9fd8b1;border-radius:4px"></div>
<div class="t" id="t194" style="left:1712.06px;top:1325.00px;font-size:12.41px;line-height:20px;color:#15703a;font-weight:normal;font-family:'Liberation Mono',monospace;letter-spacing:-0.584px;-webkit-text-stroke:0.15px #15703a;">PRESS</div>
</div></div>
</body></html>
